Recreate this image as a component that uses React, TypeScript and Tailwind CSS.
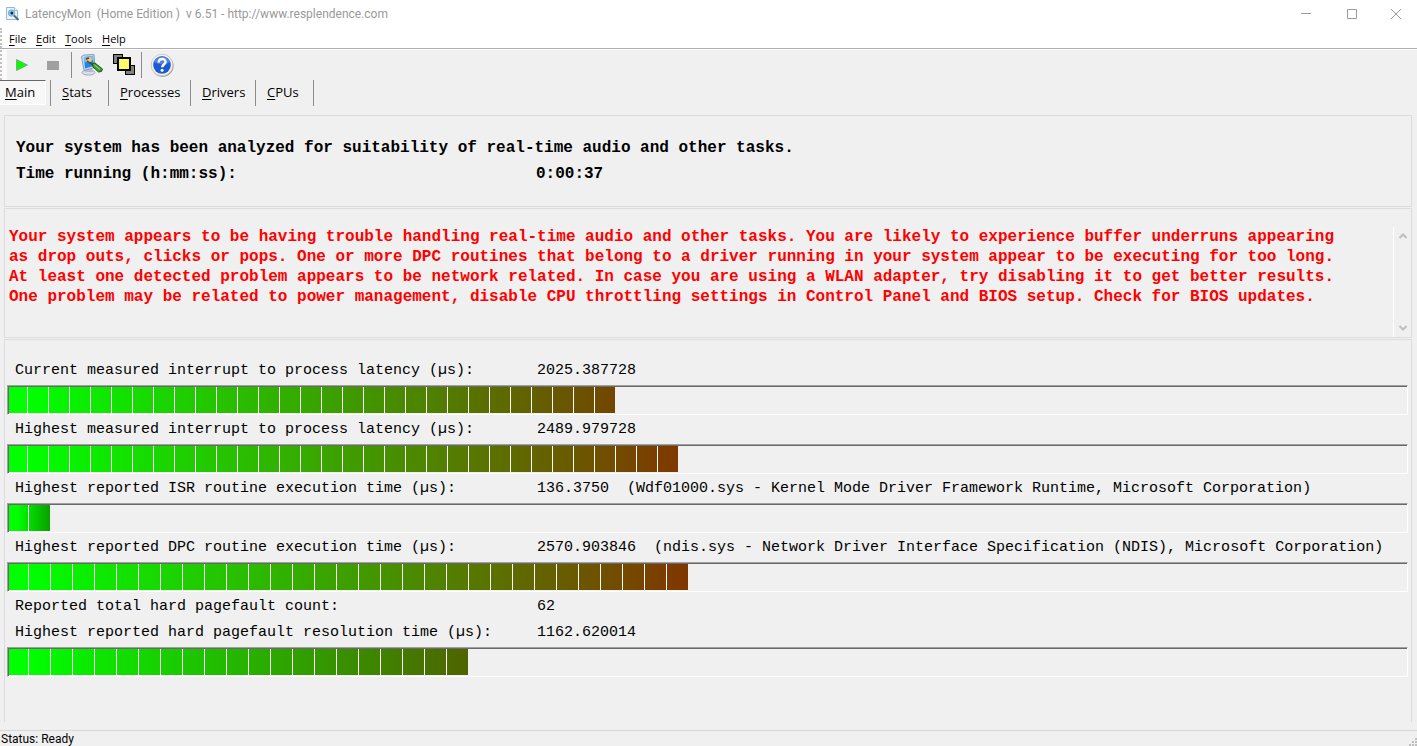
import React from "react";

type Meter = { label: string; value: string; detail?: string; first: number; pitch: number; count: number; end: string; percent: number };

const TOP: Meter[] = [
  { label: "Current measured interrupt to process latency (µs):", value: "2025.387728", first: 19, pitch: 21, count: 29, end: "#734600", percent: 43 },
  { label: "Highest measured interrupt to process latency (µs):", value: "2489.979728", first: 19, pitch: 21, count: 32, end: "#7f3800", percent: 48 },
  { label: "Highest reported ISR routine execution time (µs):", value: "136.3750", detail: "(Wdf01000.sys - Kernel Mode Driver Framework Runtime, Microsoft Corporation)", first: 20, pitch: 22, count: 2, end: "#08a000", percent: 3 },
  { label: "Highest reported DPC routine execution time (µs):", value: "2570.903846", detail: "(ndis.sys - Network Driver Interface Specification (NDIS), Microsoft Corporation)", first: 20, pitch: 22, count: 31, end: "#803600", percent: 49 },
];
const PAGEFAULT: Meter = { label: "Highest reported hard pagefault resolution time (µs):", value: "1162.620014", first: 20, pitch: 22, count: 21, end: "#4f6300", percent: 33 };

function Reading({ label, value, detail }: { label: string; value: string; detail?: string }) {
  return (
    <div className="flex h-[18px] items-center whitespace-pre pl-[10px] text-[15px] leading-[18px]">
      <span className="w-[522px] shrink-0">{label}</span>
      <span>{value}</span>
      {detail && <span className="pl-[18px]">{detail}</span>}
    </div>
  );
}

function Bar({ m }: { m: Meter }) {
  return (
    <div
      role="meter"
      aria-label={m.label}
      aria-valuenow={m.percent}
      className="ml-[2px] mr-[3px] h-[30px] border border-b-white border-l-[#a0a0a0] border-r-white border-t-[#a0a0a0]"
    >
      <div className="flex h-full border-l border-t border-[#696969]">
        <div
          className="flex h-[26px]"
          style={{
            width: m.first + m.pitch * (m.count - 1) - 1,
            backgroundImage: `linear-gradient(to right, #00ff00, #00ff00 ${m.count > 2 ? 20 : 8}px, ${m.end})`,
          }}
        >
          {Array.from({ length: m.count }, (_, i) => (
            <div
              key={i}
              className={i < m.count - 1 ? "h-full shrink-0 border-r border-white" : "h-full"}
              style={{ width: i === 0 ? m.first : i < m.count - 1 ? m.pitch : m.pitch - 1 }}
            />
          ))}
        </div>
      </div>
    </div>
  );
}

function MeterRow({ m }: { m: Meter }) {
  return (
    <div className="flex flex-col gap-[5px]">
      <Reading label={m.label} value={m.value} detail={m.detail} />
      <Bar m={m} />
    </div>
  );
}

function Divider() {
  return <div className="h-[26px] w-px bg-[#8c8c8c]" />;
}

function AppIcon() {
  return (
    <svg width="14" height="16" viewBox="0 0 14 16">
      <path d="M.5 1.500h8l3 3v9H.5z" fill="#eaf5fd" stroke="#9bb7cc" />
      <path d="M8.500 1.500v3h3" fill="#fff" stroke="#9bb7cc" />
      <circle cx="5.500" cy="7" r="3.200" fill="#8fcdf2" stroke="#7fa9c8" />
      <circle cx="5.800" cy="7" r="1.500" fill="#12304a" />
      <path d="M8 9.500l4.500 4.500" stroke="#4a6a94" strokeWidth="2" />
    </svg>
  );
}

function MonitorIcon() {
  return (
    <svg width="24" height="24" viewBox="0 0 24 24">
      <ellipse cx="8.500" cy="19.500" rx="6.500" ry="2.600" fill="#dcdde9" stroke="#a3a6bd" />
      <path d="M6 15h6l1 4H5z" fill="#b7bbd0" />
      <path d="M1.500 3.500L4 2l10-.5 1 13-11 3z" fill="#c8d8f2" stroke="#8b9bc4" />
      <path d="M4 4l9-1 .7 10-8.700 2.500z" fill="#1d87ea" />
      <path d="M4 4l9-1 .3 4-9 2.500z" fill="#6ac1fa" />
      <path d="M6 5l5-1 1 4-4 2z" fill="#ffc35a" />
      <path d="M6 6l3-1M7 8l6 4" stroke="#5a3a1c" strokeWidth="1.500" />
      <path d="M12 10.500l3-.5 7.500 6-1 2.500-3 .5-5.500-5z" fill="#3f9a35" stroke="#1c5d1d" />
      <path d="M14.500 12l5.500 4.500" stroke="#a3df8a" />
    </svg>
  );
}

function LayersIcon() {
  return (
    <svg width="23" height="22" viewBox="0 0 23 22" shapeRendering="crispEdges">
      <path d="M0 0h10v10H0z" fill="#000" />
      <path d="M1 1h8v8H1z" fill="#808080" />
      <path d="M12 11h10v10H12z" fill="#000" />
      <path d="M13 12h8v8h-8z" fill="#808080" />
      <path d="M4 3h14v14H4z" fill="#000" />
      <path d="M6 5h10v10H6z" fill="#ffff30" />
      <path d="M7 5h2v2H7zM11 5h2v2h-2zM9 7h2v2H9zM13 7h2v2h-2zM7 9h2v2H7zM11 9h2v2h-2zM9 11h2v2H9zM13 11h2v2h-2zM7 13h2v2H7zM11 13h2v2h-2z" fill="#ffffa8" />
    </svg>
  );
}

function HelpIcon() {
  return (
    <svg width="24" height="24" viewBox="0 0 24 24">
      <circle cx="12.500" cy="12.700" r="11" fill="#8c8c8c" />
      <circle cx="12" cy="12" r="10.800" fill="#f4f4f4" stroke="#c4c4c4" strokeWidth=".8" />
      <circle cx="12" cy="12" r="8.800" fill="#1e5bd0" />
      <path d="M4 9a8.500 8.500 0 0 1 16 0c-4 3-11 3-16 0z" fill="#4f84e0" />
      <path d="M8.700 9.400c0-4.500 6.800-4.500 6.800-.500 0 2.600-3.300 2.700-3.300 5.400" fill="none" stroke="#fff" strokeWidth="2.400" />
      <circle cx="12.100" cy="17.300" r="1.500" fill="#fff" />
    </svg>
  );
}

export default function App() {
  const menus = [
    { name: "File", cls: "w-[27px]" },
    { name: "Edit", cls: "w-[29px]" },
    { name: "Tools", cls: "w-[37px]" },
    { name: "Help", cls: "w-[30px]" },
  ];
  const tabs = [
    { name: "Stats", cls: "w-[58px]" },
    { name: "Processes", cls: "w-[82px]" },
    { name: "Drivers", cls: "w-[65px]" },
    { name: "CPUs", cls: "w-[58px]" },
  ];
  return (
    <div className="flex min-h-screen flex-col overflow-hidden bg-[#f0f0f0] font-['Open_Sans',sans-serif] text-black">
      <header className="flex h-[28px] items-center bg-white pl-[6px]">
        <AppIcon />
        <h1 className="whitespace-pre pl-[5px] font-['Roboto',sans-serif] text-[12px] text-[#999999]">LatencyMon  (Home Edition )  v 6.51 - http://www.resplendence.com</h1>
        <div className="ml-auto flex">
          <button aria-label="Minimize" className="flex h-[28px] w-[46px] items-center justify-center">
            <svg width="10" height="10" viewBox="0 0 10 10"><path d="M0 4.500h10" stroke="#999" /></svg>
          </button>
          <button aria-label="Maximize" className="flex h-[28px] w-[45px] items-center justify-center">
            <svg width="10" height="10" viewBox="0 0 10 10"><path d="M.5.5h9v9h-9z" fill="none" stroke="#999" /></svg>
          </button>
          <button aria-label="Close" className="flex h-[28px] w-[43px] items-center justify-center">
            <svg width="10" height="10" viewBox="0 0 10 10"><path d="M0 0l10 10M10 0L0 10" stroke="#999" /></svg>
          </button>
        </div>
      </header>
      <nav className="flex h-[21px] items-center border-b border-[#b0b0b0] bg-white">
        <div className="h-full w-[2px] border-l-2 border-dotted border-[#c0c0c0]" />
        <div className="flex pl-[7px] pt-[2px] text-[11px] leading-[18px]">
          {menus.map((m) => (
            <button key={m.name} className={"text-left " + m.cls}><span className="underline underline-offset-2">{m.name[0]}</span>{m.name.slice(1)}</button>
          ))}
        </div>
      </nav>
      <div className="flex h-[31px] items-center border-t border-white">
        <div className="h-full w-[7px] border-l-2 border-dotted border-[#c0c0c0] bg-[#fafafa]" />
        <button aria-label="Start" className="ml-[9px] w-[12px]">
          <svg width="12" height="12" viewBox="0 0 12 12"><path d="M.5.5v11l11-5.500z" fill="#00ff00" stroke="#7d9b7d" strokeWidth=".8" /></svg>
        </button>
        <button aria-label="Stop" className="ml-[19px] h-[9px] w-[12px] bg-[#a0a0a0]" />
        <div className="ml-[12px] mr-[8px]"><Divider /></div>
        <button aria-label="Options"><MonitorIcon /></button>
        <button aria-label="Windows" className="ml-[9px]"><LayersIcon /></button>
        <div className="ml-[5px] mr-[8px]"><Divider /></div>
        <button aria-label="Help contents"><HelpIcon /></button>
      </div>
      <div role="tablist" className="flex h-[26px] items-start text-[13px] leading-[23px]">
        <button role="tab" aria-selected className="h-[25px] w-[46px] border-b border-r border-t border-b-white border-r-white border-t-[#696969] bg-[#f8f8f8] pl-[5px] text-left">
          <span className="underline underline-offset-2">M</span>ain
        </button>
        <div className="ml-[4px]"><Divider /></div>
        {tabs.map((t) => (
          <button role="tab" aria-selected={false} key={t.name} className={"h-[26px] border-r border-[#8c8c8c] pb-[2px] pl-[11px] text-left " + t.cls}>
            <span className="underline underline-offset-2">{t.name[0]}</span>{t.name.slice(1)}
          </button>
        ))}
      </div>
      <main className="flex flex-1 flex-col gap-px pb-[8px] pl-[4px] pr-[5px] pt-[9px] font-['Liberation_Mono',monospace]">
        <section className="h-[92px] border border-[#dcdcdc] pl-[11px] pt-[19px] text-[16px] font-bold leading-[26px]">
          <p>Your system has been analyzed for suitability of real-time audio and other tasks.</p>
          <p className="flex"><span className="w-[520px]">Time running (h:mm:ss):</span><span>0:00:37</span></p>
        </section>
        <section className="flex h-[130px] border border-[#dcdcdc] pl-[4px] pt-[18px] text-[16px] font-bold leading-[20px] text-[#ff0000]">
          <div className="flex-1 whitespace-nowrap">
            <p>Your system appears to be having trouble handling real-time audio and other tasks. You are likely to experience buffer underruns appearing</p>
            <p>as drop outs, clicks or pops. One or more DPC routines that belong to a driver running in your system appear to be executing for too long.</p>
            <p>At least one detected problem appears to be network related. In case you are using a WLAN adapter, try disabling it to get better results.</p>
            <p>One problem may be related to power management, disable CPU throttling settings in Control Panel and BIOS setup. Check for BIOS updates.</p>
          </div>
          <div className="flex w-[18px] shrink-0 flex-col items-center justify-between border-l border-white py-[6px]">
            <button aria-label="Scroll up" className="flex"><svg width="8" height="6" viewBox="0 0 8 6"><path d="M.5 5L4 1.500 7.500 5" fill="none" stroke="#bfbfbf" strokeWidth="2" /></svg></button>
            <button aria-label="Scroll down" className="flex"><svg width="8" height="6" viewBox="0 0 8 6"><path d="M.5 1L4 4.500 7.500 1" fill="none" stroke="#bfbfbf" strokeWidth="2" /></svg></button>
          </div>
        </section>
        <section className="flex flex-1 flex-col border border-b-0 border-[#dcdcdc] pt-[22px]">
          <div className="flex flex-col gap-[6px]">
            {TOP.map((m) => <MeterRow key={m.label} m={m} />)}
            <Reading label="Reported total hard pagefault count:" value="62" />
            <div className="pt-[2px]"><MeterRow m={PAGEFAULT} /></div>
          </div>
        </section>
      </main>
      <footer className="flex h-[16px] items-end justify-between border-t border-[#d7d7d7] pl-px font-['Roboto',sans-serif] text-[12px] leading-[14px]">
        <span>Status: Ready</span>
        <svg width="8" height="8" viewBox="0 0 8 8"><path d="M6 0h2v2H6zM3 3h2v2H3zM6 3h2v2H6zM0 6h2v2H0zM3 6h2v2H3zM6 6h2v2H6z" fill="#bfbfbf" /></svg>
      </footer>
    </div>
  );
}
